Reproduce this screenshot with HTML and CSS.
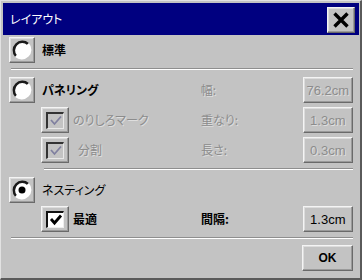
FILE: index.html
```html
<!DOCTYPE html>
<html lang="ja">
<head>
<meta charset="utf-8">
<link rel="stylesheet" href="styles.css">
</head>
<body>
<div class="dialog">
  <div class="titlebar">
    <span class="title">レイアウト</span>
    <div class="bevel close">
      <svg width="18" height="18" viewBox="0 0 18 18"><path d="M2.5 2.5L15.5 15.5M15.5 2.5L2.5 15.5" stroke="#000" stroke-width="3.4" fill="none"/></svg>
    </div>
  </div>
  <div class="content">
    <div class="row r1">
      <div class="left">
        <div class="bevel radio"><svg width="20" height="20" viewBox="0 0 20 20"><circle cx="10" cy="10" r="8.5" fill="#fff"/><path d="M4 16A8.5 8.5 0 0 1 16 4" stroke="#1a1a1a" stroke-width="2.5" fill="none"/><path d="M16 4A8.5 8.5 0 0 1 4 16" stroke="#fff" stroke-width="2.5" fill="none"/></svg></div>
        <span class="label strong">標準</span>
      </div>
    </div>
    <div class="sep s1"></div>
    <div class="row r2">
      <div class="left">
        <div class="bevel radio"><svg width="20" height="20" viewBox="0 0 20 20"><circle cx="10" cy="10" r="8.5" fill="#fff"/><path d="M4 16A8.5 8.5 0 0 1 16 4" stroke="#1a1a1a" stroke-width="2.5" fill="none"/><path d="M16 4A8.5 8.5 0 0 1 4 16" stroke="#fff" stroke-width="2.5" fill="none"/></svg></div>
        <span class="label strong">パネリング</span>
      </div>
      <span class="flabel disabled">幅:</span>
      <div class="bevel field disabled">76.2cm</div>
    </div>
    <div class="row r3">
      <div class="left indent">
        <div class="bevel check"><div class="box off"><svg width="14" height="13" viewBox="0 0 14 13"><path d="M2 6L5.5 10L12 2.5" stroke="#8080a0" stroke-width="1.8" fill="none"/></svg></div></div>
        <span class="label disabled">のりしろマーク</span>
      </div>
      <span class="flabel disabled">重なり:</span>
      <div class="bevel field disabled">1.3cm</div>
    </div>
    <div class="row r4">
      <div class="left indent">
        <div class="bevel check"><div class="box off"><svg width="14" height="13" viewBox="0 0 14 13"><path d="M2 6L5.5 10L12 2.5" stroke="#8080a0" stroke-width="1.8" fill="none"/></svg></div></div>
        <span class="label disabled wide">分割</span>
      </div>
      <span class="flabel disabled">長さ:</span>
      <div class="bevel field disabled">0.3cm</div>
    </div>
    <div class="sep s2"></div>
    <div class="row r5">
      <div class="left">
        <div class="bevel radio"><svg width="20" height="20" viewBox="0 0 20 20"><circle cx="10" cy="10" r="8.5" fill="#fff"/><path d="M4 16A8.5 8.5 0 0 1 16 4" stroke="#1a1a1a" stroke-width="2.5" fill="none"/><path d="M16 4A8.5 8.5 0 0 1 4 16" stroke="#fff" stroke-width="2.5" fill="none"/><circle cx="10" cy="10" r="3.5" fill="#000"/></svg></div>
        <span class="label">ネスティング</span>
      </div>
    </div>
    <div class="row r6">
      <div class="left indent">
        <div class="bevel check"><div class="box on"><svg width="14" height="13" viewBox="0 0 14 13"><path d="M2 6L5.5 10L12 2.5" stroke="#000" stroke-width="2.8" fill="none"/></svg></div></div>
        <span class="label strong">最適</span>
      </div>
      <span class="flabel strong">間隔:</span>
      <div class="bevel field">1.3cm</div>
    </div>
    <div class="sep s3"></div>
    <div class="row r7">
      <div class="bevel field ok">OK</div>
    </div>
  </div>
</div>
</body>
</html>
```
FILE: styles.css
```css
html, body {
  margin: 0;
  padding: 0;
  background: #c3c3c3;
}
.dialog {
  width: 362px;
  height: 280px;
  box-sizing: border-box;
  background: #c3c3c3;
  border-style: solid;
  border-width: 1px 2px 2px 1px;
  border-color: #e2e2e2 #5a5a5a #5a5a5a #e2e2e2;
  padding: 2px 1px 0 2px;
  font-family: "Noto Sans CJK JP", "Liberation Sans", sans-serif;
  font-size: 12px;
  font-feature-settings: "palt";
  color: #000;
}
.titlebar {
  height: 32px;
  background: #000080;
  display: flex;
  align-items: center;
  justify-content: space-between;
  padding: 0 4px 0 7px;
}
.title {
  color: #fff;
  font-size: 12px;
  line-height: 1;
}
.bevel {
  box-sizing: border-box;
  background: #c3c3c3;
  border: 1px solid;
  border-color: #f4f4f4 #6a6a6a #6a6a6a #f4f4f4;
  box-shadow: inset -1px -1px 0 #9a9a9a, inset 1px 1px 0 #dcdcdc;
  display: flex;
  align-items: center;
  justify-content: center;
}
.close {
  width: 28px;
  height: 26px;
  margin-top: 2px;
}
.content {
  padding: 0 6px 0 6px;
}
.row {
  display: flex;
  align-items: center;
  height: 26px;
}
.r1 { margin-top: 2px; }
.r2 { margin-top: 7px; }
.r3 { margin-top: 4px; }
.r4 { margin-top: 4px; }
.r5 { margin-top: 7px; }
.r6 { margin-top: 3px; }
.r7 { margin-top: 6px; justify-content: flex-end; }
.left {
  width: 194px;
  display: flex;
  align-items: center;
}
.left.indent {
  padding-left: 32px;
  box-sizing: border-box;
}
.radio {
  width: 26px;
  height: 26px;
}
.check {
  width: 28px;
  height: 26px;
}
.box {
  width: 18px;
  height: 17px;
  box-sizing: border-box;
  border-style: solid;
  border-width: 2px 1px 1px 2px;
  border-color: #111 #eee #eee #111;
  display: flex;
  align-items: center;
  justify-content: center;
}
.box.on { background: #fff; }
.box.off { background: #c3c3c3; border-color: #333 #e8e8e8 #e8e8e8 #333; }
.label {
  margin-left: 7px;
  line-height: 1;
}
.check + .label { margin-left: 4px; }
.check + .label.wide { margin-left: 9px; }
.strong { font-weight: bold; }
.disabled {
  color: #8c8c8c;
  text-shadow: 1px 1px 0 #dedede;
}
.flabel {
  width: 103px;
  line-height: 1;
}
.field {
  width: 51px;
  height: 26px;
  font-family: "Liberation Sans", Arial, sans-serif;
  font-size: 13px;
  font-feature-settings: normal;
}
.ok {
  font-weight: bold;
  font-size: 12px;
}
.sep {
  height: 1px;
  border-bottom: 1px solid #fff;
  background: #8e8e8e;
}
.s1 { margin: 5px 0 0 2px; }
.s2 { margin: 5px 0 0 35px; }
.s3 { margin: 5px 0 0 2px; }
```
